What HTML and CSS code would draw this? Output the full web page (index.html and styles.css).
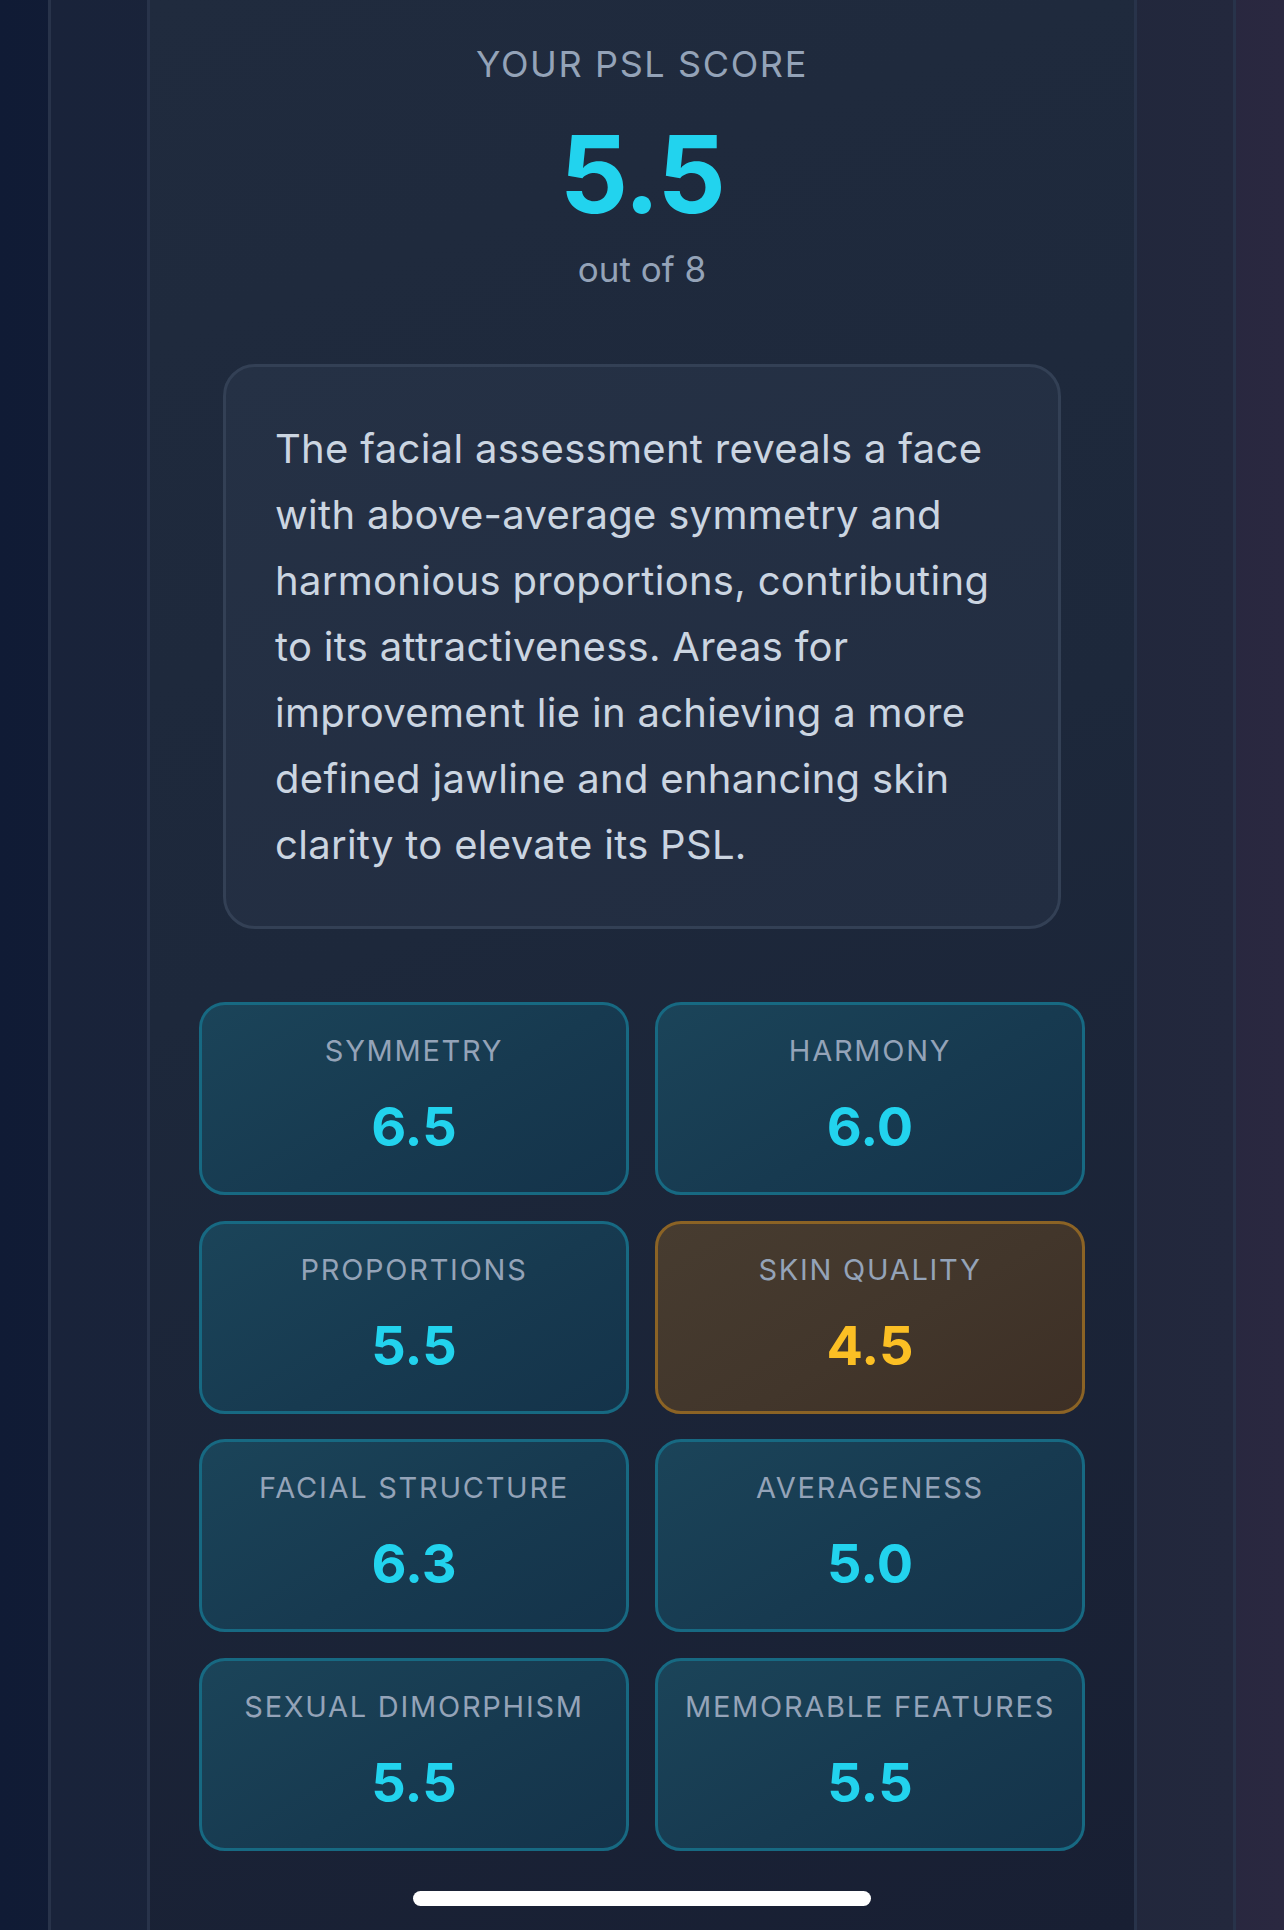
FILE: index.html
```html
<!DOCTYPE html>
<html lang="en">
<head>
<meta charset="utf-8">
<title>PSL Score</title>
<link rel="stylesheet" href="styles.css">
</head>
<body>
<div class="frame">
  <div class="panel">
    <header class="score-head">
      <div class="score-label">YOUR PSL SCORE</div>
      <div class="score-value">5.5</div>
      <div class="score-max">out of 8</div>
    </header>
    <section class="summary">
      <p>The facial assessment reveals a face with above-average symmetry and harmonious proportions, contributing to its attractiveness. Areas for improvement lie in achieving a more defined jawline and enhancing skin clarity to elevate its PSL.</p>
    </section>
    <section class="metrics">
      <div class="card"><div class="card-label">SYMMETRY</div><div class="card-value">6.5</div></div>
      <div class="card"><div class="card-label">HARMONY</div><div class="card-value">6.0</div></div>
      <div class="card"><div class="card-label">PROPORTIONS</div><div class="card-value">5.5</div></div>
      <div class="card card-warn"><div class="card-label">SKIN QUALITY</div><div class="card-value">4.5</div></div>
      <div class="card"><div class="card-label">FACIAL STRUCTURE</div><div class="card-value">6.3</div></div>
      <div class="card"><div class="card-label">AVERAGENESS</div><div class="card-value">5.0</div></div>
      <div class="card"><div class="card-label">SEXUAL DIMORPHISM</div><div class="card-value">5.5</div></div>
      <div class="card"><div class="card-label">MEMORABLE FEATURES</div><div class="card-value">5.5</div></div>
    </section>
  </div>
</div>
<div class="home-indicator"></div>
</body>
</html>
```

FILE: styles.css
```css
* { box-sizing: border-box; }
html, body { margin: 0; padding: 0; }
body {
  height: 1930px;
  overflow: hidden;
  font-family: Inter, "Noto Sans", "Liberation Sans", sans-serif;
  background: linear-gradient(90deg, #101b35 0%, #1a2236 50%, #2a2840 100%);
  position: relative;
}
.frame {
  margin: 0 48px;
  height: 100%;
  border-left: 3px solid #28334a;
  border-right: 3px solid #28334a;
  background: linear-gradient(90deg, #19233a 0%, #1b2438 50%, #23283d 100%);
}
.panel {
  margin: 0 96px;
  height: 100%;
  border-left: 3px solid #28334a;
  border-right: 3px solid #28334a;
  background: linear-gradient(160deg, #202b3e 0%, #1d283b 45%, #181f33 100%);
  display: flex;
  flex-direction: column;
  align-items: center;
}
.score-head {
  padding-top: 43px;
  display: flex;
  flex-direction: column;
  align-items: center;
}
.score-label {
  font-size: 36px;
  line-height: 43px;
  letter-spacing: 0.045em;
  color: #94a3b8;
}
.score-value {
  margin-top: 34px;
  font-size: 107px;
  line-height: 108px;
  font-weight: 700;
  color: #22d3ee;
  letter-spacing: -0.015em;
}
.score-max {
  margin-top: 20px;
  font-size: 35px;
  line-height: 42px;
  color: #94a3b8;
}
.summary {
  margin-top: 74px;
  width: 838px;
  border: 3px solid #334055;
  border-radius: 32px;
  background: linear-gradient(160deg, #253145 0%, #222d41 100%);
  padding: 49px 46px 48px 49px;
}
.summary p {
  margin: 0;
  font-size: 40px;
  line-height: 66px;
  letter-spacing: 0.3px;
  color: #cbd5e1;
}
.metrics {
  margin-top: 73px;
  width: 886px;
  display: grid;
  grid-template-columns: 430px 430px;
  column-gap: 26px;
  row-gap: 25.5px;
}
.card {
  height: 193px;
  border: 3px solid #176982;
  border-radius: 26px;
  background: linear-gradient(150deg, #1b4459 0%, #173a50 55%, #14334a 100%);
  padding-top: 28px;
  display: flex;
  flex-direction: column;
  align-items: center;
}
.card-label {
  font-size: 29px;
  line-height: 36px;
  letter-spacing: 0.06em;
  color: #94a3b8;
  white-space: nowrap;
}
.card-value {
  margin-top: 31px;
  font-size: 54px;
  line-height: 54px;
  font-weight: 700;
  color: #22d3ee;
}
.card-warn {
  border-color: #8b6325;
  background: linear-gradient(150deg, #473c30 0%, #42362b 55%, #3d2f25 100%);
}
.card-warn .card-value { color: #fbbf24; }
.home-indicator {
  position: absolute;
  left: 413px;
  top: 1891px;
  width: 458px;
  height: 15px;
  border-radius: 8px;
  background: #ffffff;
}
```
